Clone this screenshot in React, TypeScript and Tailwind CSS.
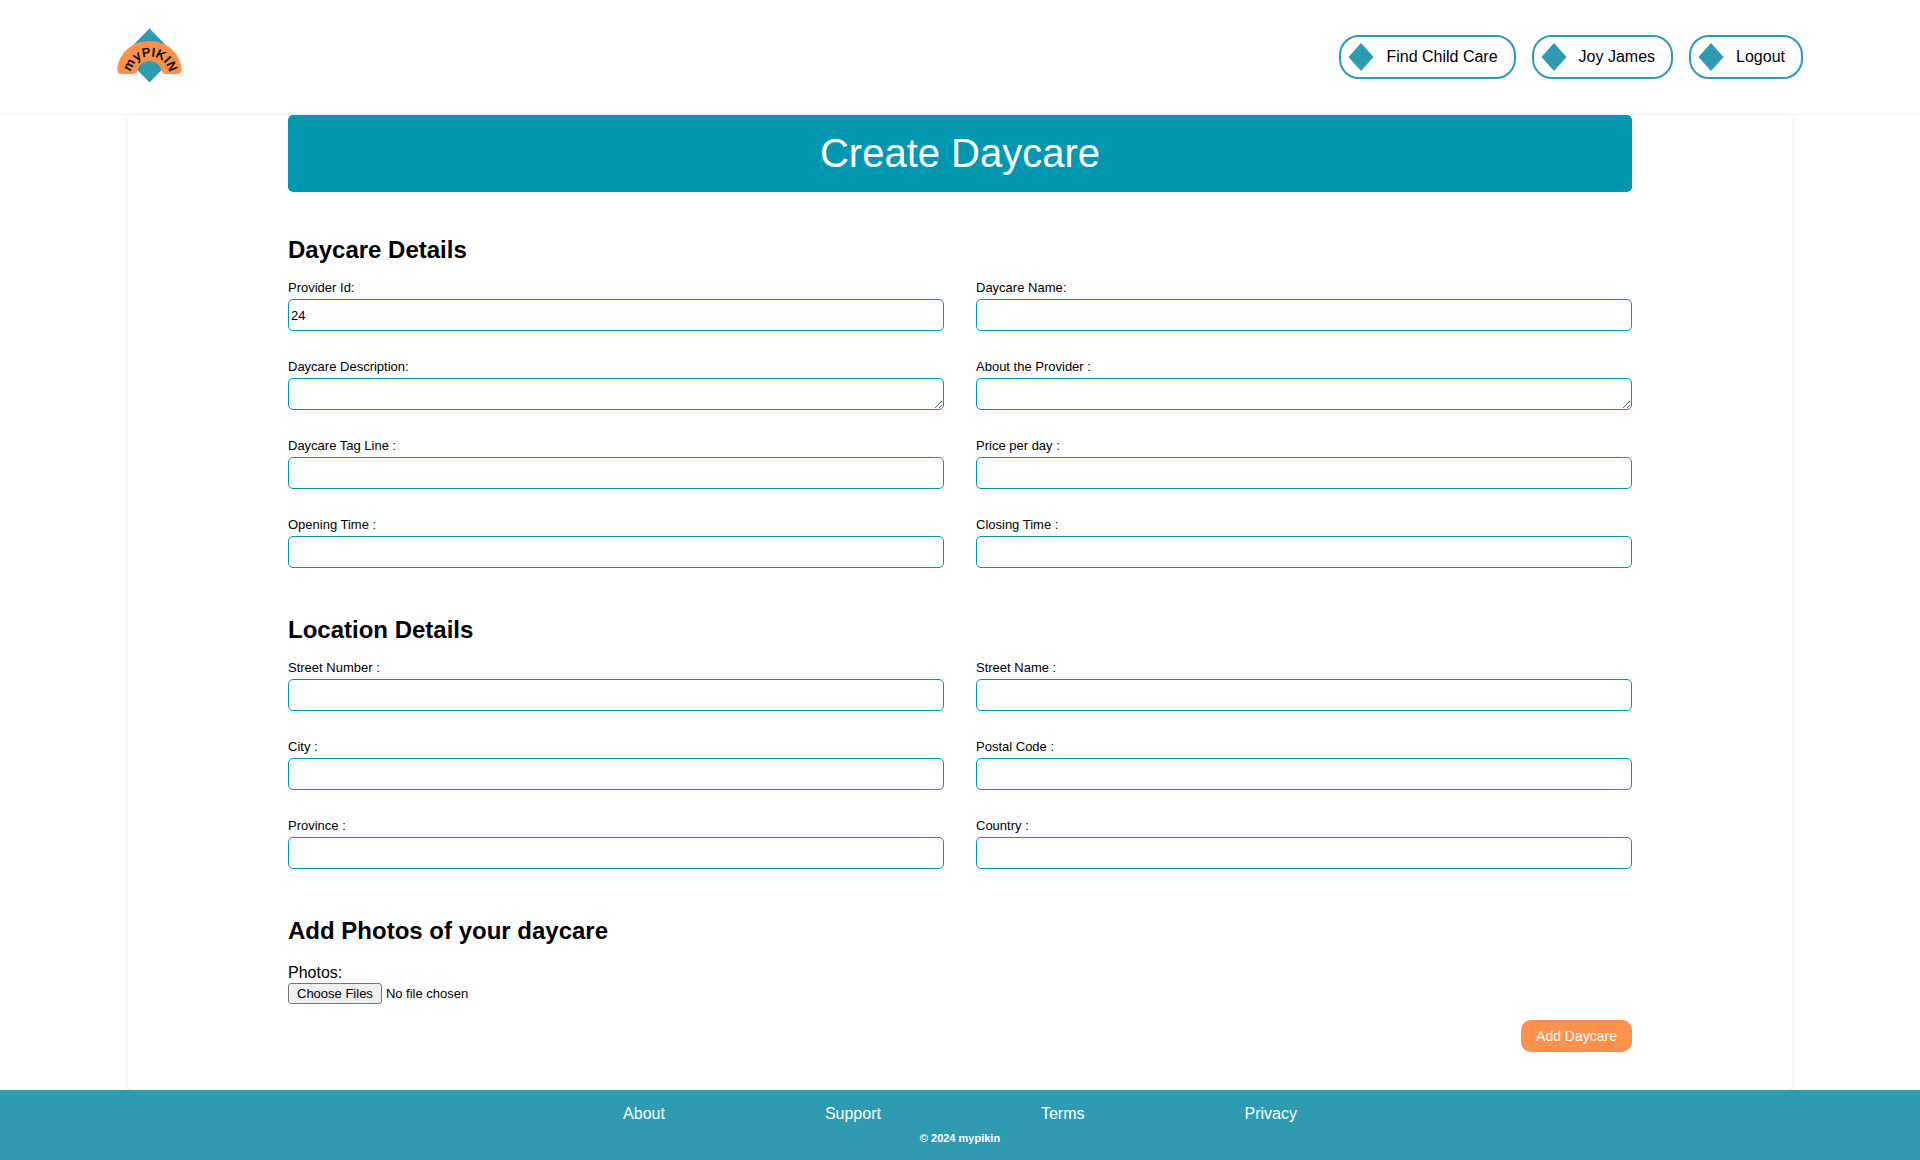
import { useState } from "react";

type Field = { id: string; label: string; kind?: "area"; value?: string };

const daycareFields: Field[] = [
  { id: "provider-id", label: "Provider Id:", value: "24" },
  { id: "daycare-name", label: "Daycare Name:" },
  { id: "description", label: "Daycare Description:", kind: "area" },
  { id: "about", label: "About the Provider :", kind: "area" },
  { id: "tag-line", label: "Daycare Tag Line :" },
  { id: "price", label: "Price per day :" },
  { id: "opening", label: "Opening Time :" },
  { id: "closing", label: "Closing Time :" },
];

const locationFields: Field[] = [
  { id: "street-number", label: "Street Number :" },
  { id: "street-name", label: "Street Name :" },
  { id: "city", label: "City :" },
  { id: "postal-code", label: "Postal Code :" },
  { id: "province", label: "Province :" },
  { id: "country", label: "Country :" },
];

function Logo() {
  return (
    <svg viewBox="0 0 66 56" className="h-14 w-[66px]" role="img" aria-label="myPIKIN">
      <path d="M32.5 0.5 L59 27.5 L32.5 54.5 L6 27.5 Z" fill="#2e9bb0" />
      <path
        d="M5 46 Q0 46 0.3 41 C2 25 15 13 32.5 13 C50 13 63 25 64.7 41 Q65 46 60 46 L49 46 Q45.500 46 44.600 42.500 C43 36.500 38.500 33 32.500 33 C26.500 33 22 36.500 20.400 42.500 Q19.500 46 16 46 Z"
        fill="#ff914d"
      />
      <defs>
        <path id="logo-arc" d="M13.500 48 A19.500 19.500 0 0 1 52.500 48" />
      </defs>
      <text className="font-bold" fontSize="13" fill="#111">
        <textPath href="#logo-arc" startOffset="4">
          myPIKIN
        </textPath>
      </text>
    </svg>
  );
}

function NavPill({ label }: { label: string }) {
  return (
    <a
      href="#"
      className="flex h-11 items-center gap-3 rounded-[20px] border-2 border-[#2e9bb0] pr-4 pl-[7px] text-base"
    >
      <svg viewBox="0 0 26 28" className="h-7 w-[26px]" aria-hidden="true">
        <path d="M13 0 L25.500 14 L13 28 L0.500 14 Z" fill="#2e9bb0" />
      </svg>
      {label}
    </a>
  );
}

function FormField({ field }: { field: Field }) {
  const [value, setValue] = useState(field.value ?? "");
  const box = "block h-8 w-full rounded-[5px] border border-[#0097b2] bg-white px-0.5 text-[13px]";
  return (
    <div className="flex flex-col gap-1">
      <label htmlFor={field.id} className="text-[13px] leading-[15px]">
        {field.label}
      </label>
      {field.kind === "area" ? (
        <textarea id={field.id} className={box} value={value} onChange={(e) => setValue(e.target.value)} />
      ) : (
        <input id={field.id} type="text" className={box} value={value} onChange={(e) => setValue(e.target.value)} />
      )}
    </div>
  );
}

function FormSection({ title, fields }: { title: string; fields: Field[] }) {
  return (
    <section>
      <h2 className="mb-3.5 text-2xl font-bold">{title}</h2>
      <div className="grid grid-cols-2 gap-x-8 gap-y-7">
        {fields.map((f) => (
          <FormField key={f.id} field={f} />
        ))}
      </div>
    </section>
  );
}

export default function App() {
  return (
    <div className="flex min-h-screen flex-col bg-white font-['Liberation_Sans',Arial,sans-serif] text-black">
      <header className="flex items-center justify-between border-b border-[#f8f5f0] px-[117px] py-7">
        <a href="#" className="h-[58px]">
          <Logo />
        </a>
        <nav className="flex gap-4">
          <NavPill label="Find Child Care" />
          <NavPill label="Joy James" />
          <NavPill label="Logout" />
        </nav>
      </header>

      <main className="flex grow flex-col px-32">
        <form
          className="grow rounded-[5px] px-40 pb-[38px] shadow-[0_2px_5px_2px_rgba(0,0,0,0.05)]"
          onSubmit={(e) => e.preventDefault()}
        >
          <h1 className="mb-[42px] rounded-[5px] bg-[#0097b2] py-4 text-center text-[40px] leading-[45px] text-white">
            Create Daycare
          </h1>
          <div className="flex flex-col gap-[46px]">
            <FormSection title="Daycare Details" fields={daycareFields} />
            <FormSection title="Location Details" fields={locationFields} />
            <section>
              <h2 className="mb-4 text-2xl font-bold">Add Photos of your daycare</h2>
              <label htmlFor="photos" className="block text-base leading-5">
                Photos:
              </label>
              <input
                id="photos"
                type="file"
                multiple
                className="block text-[13px] leading-[15px] file:mr-1 file:h-[21px] file:rounded-[3px] file:border file:border-solid file:border-[#767676] file:bg-[#efefef] file:px-2 file:text-[13px] file:leading-[15px]"
              />
            </section>
          </div>
          <div className="mt-4 flex justify-end">
            <button type="submit" className="h-8 rounded-[10px] bg-[#ff914d] px-[15px] text-sm text-white">
              Add Daycare
            </button>
          </div>
        </form>
      </main>

      <footer className="flex flex-col items-center gap-1 bg-[#2e9bb0] pt-3 pb-[14px] text-white">
        <nav className="flex gap-40 text-base">
          <a href="#">About</a>
          <a href="#">Support</a>
          <a href="#">Terms</a>
          <a href="#">Privacy</a>
        </nav>
        <p className="text-[11px] leading-4 font-bold">© 2024 mypikin</p>
      </footer>
    </div>
  );
}
